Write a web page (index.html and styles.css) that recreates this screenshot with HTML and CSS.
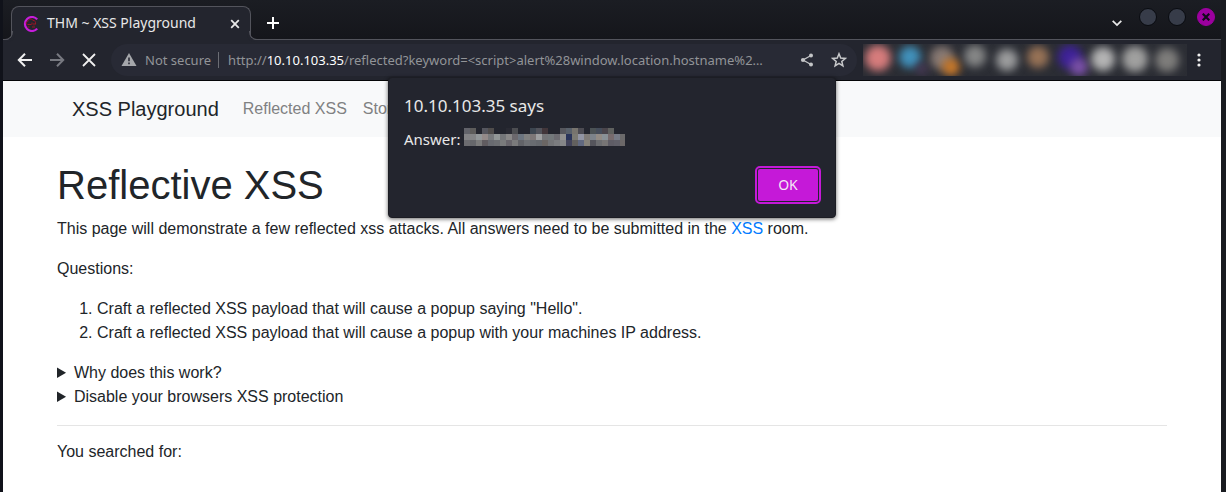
FILE: index.html
```html
<!DOCTYPE html>
<html lang="en">
<head>
<meta charset="utf-8">
<title>THM ~ XSS Playground</title>
<link rel="stylesheet" href="styles.css">
</head>
<body>
<div class="window">
  <header class="tabstrip">
    <div class="tab">
      <svg class="favicon" width="16" height="16" viewBox="0 0 16 16" fill="none"><path d="M14.2 3.4A7 7 0 1 0 14.2 12.6" stroke="#c61ddb" stroke-width="2.2"/><path d="M4.5 8.5c-2-.3-1.600-3 .3-3C5.500 2.500 9.500 2.500 10 4.500c2-.3 3 1.500 2.500 4M5 8.500h3.500M9 6.500v2M11 7v2.500M4.500 11h2M9 11h3" stroke="#a01525" stroke-width="1"/></svg>
      <span class="tab-title">THM ~ XSS Playground</span>
      <button class="icon" aria-label="Close tab"><svg width="10" height="10" viewBox="0 0 10 10"><path d="M1.200 1.200l7.600 7.600M8.800 1.200l-7.600 7.600" stroke="#e8e8e8" stroke-width="1.800"/></svg></button>
    </div>
    <button class="icon new-tab" aria-label="New tab"><svg width="12" height="12" viewBox="0 0 12 12"><path d="M6 0v12M0 6h12" stroke="#fff" stroke-width="2"/></svg></button>
    <div class="window-controls">
      <button class="icon search-tabs" aria-label="Search tabs"><svg width="10" height="7" viewBox="0 0 10 7" fill="none"><path d="M.7.8L5 5.100 9.300.8" stroke="#e8e8e8" stroke-width="1.800"/></svg></button>
      <button class="dot" aria-label="Minimize"></button>
      <button class="dot" aria-label="Maximize"></button>
      <button class="dot close" aria-label="Close"><svg width="8" height="8" viewBox="0 0 8 8"><path d="M.7.7l6.600 6.600M7.300.7L.7 7.300" stroke="#10091a" stroke-width="2.200"/></svg></button>
    </div>
  </header>
  <div class="toolbar">
    <div class="nav-buttons">
      <button class="icon" aria-label="Back"><svg width="16" height="14" viewBox="0 0 16 14" fill="none"><path d="M15 7H2M8 .8L1.800 7 8 13.200" stroke="#f0f0f0" stroke-width="2"/></svg></button>
      <button class="icon" aria-label="Forward" disabled><svg width="16" height="14" viewBox="0 0 16 14" fill="none"><path d="M1 7h13M8 .8L14.200 7 8 13.200" stroke="#777980" stroke-width="2"/></svg></button>
      <button class="icon" aria-label="Stop"><svg width="16" height="14" viewBox="0 0 16 14" fill="none"><path d="M2 1l12 12M14 1L2 13" stroke="#f0f0f0" stroke-width="1.800"/></svg></button>
    </div>
    <div class="address">
      <svg width="16" height="14" viewBox="0 0 16 14"><path d="M8 0l7.500 13H.5z" fill="#a5a7ab"/><path d="M8 4.500v3.800M8 9.500v1.700" stroke="#282a35" stroke-width="1.600"/></svg>
      <span class="security">Not secure</span>
      <span class="url">http://<b>10.10.103.35</b>/reflected?keyword=&lt;script&gt;alert%28window.location.hostname%2…</span>
      <button class="icon" aria-label="Share"><svg width="14" height="14" viewBox="0 0 14 14"><path d="M11 2.500L3 7l8 4.500" stroke="#c4c5c7" stroke-width="1.300" fill="none"/><g fill="#c4c5c7"><circle cx="11" cy="2.500" r="2"/><circle cx="3" cy="7" r="2.100"/><circle cx="11" cy="11.500" r="2"/></g></svg></button>
      <button class="icon" aria-label="Bookmark"><svg width="16" height="16" viewBox="0 0 16 16"><path d="M8 1.800l1.700 4.300 4.600.3-3.500 3 1.100 4.500L8 11.400l-3.900 2.500 1.100-4.500-3.500-3 4.600-.3z" fill="none" stroke="#c8c9cb" stroke-width="1.500"/></svg></button>
    </div>
    <div class="extensions">
      <svg width="324" height="32" viewBox="0 0 324 32">
        <defs><filter id="soft" x="-100%" y="-100%" width="300%" height="300%" color-interpolation-filters="sRGB"><feGaussianBlur stdDeviation="4.500"/></filter></defs>
        <rect width="324" height="32" fill="#2b2d34"/>
        <g>
          <circle filter="url(#soft)" cx="15" cy="14" r="13" fill="#d67c7c"/>
          <circle filter="url(#soft)" cx="47" cy="13" r="11" fill="#4191bb"/>
          <circle filter="url(#soft)" cx="59" cy="25" r="6" fill="#493958"/>
          <circle filter="url(#soft)" cx="79" cy="14" r="12" fill="#887a74"/>
          <circle filter="url(#soft)" cx="88" cy="23" r="9" fill="#c87829"/>
          <circle filter="url(#soft)" cx="112" cy="12" r="11" fill="#858686"/>
          <circle filter="url(#soft)" cx="144" cy="16" r="11" fill="#9b9c9d"/>
          <circle filter="url(#soft)" cx="175" cy="13" r="11" fill="#977256"/>
          <circle filter="url(#soft)" cx="207" cy="13" r="12" fill="#3e2298"/>
          <circle filter="url(#soft)" cx="216" cy="23" r="9" fill="#7c51aa"/>
          <circle filter="url(#soft)" cx="240" cy="15" r="12" fill="#b4b4b4"/>
          <circle filter="url(#soft)" cx="272" cy="15" r="13" fill="#a0a09f"/>
          <circle filter="url(#soft)" cx="304" cy="16" r="12" fill="#7e7d7b"/>
        </g>
      </svg>
    </div>
    <button class="icon menu" aria-label="Menu"><svg width="4" height="14" viewBox="0 0 4 14" fill="#f0f0f0"><circle cx="2" cy="2" r="1.600"/><circle cx="2" cy="7" r="1.600"/><circle cx="2" cy="12" r="1.600"/></svg></button>
  </div>
  <div class="page">
    <nav class="navbar">
      <div class="container navbar-inner">
        <a class="brand" href="#">XSS Playground</a>
        <a class="nav-link" href="#">Reflected XSS</a>
        <a class="nav-link" href="#">Stored XSS</a>
      </div>
    </nav>
    <main class="container content">
      <h1>Reflective XSS</h1>
      <p>This page will demonstrate a few reflected xss attacks. All answers need to be submitted in the <a href="#">XSS</a> room.</p>
      <p>Questions:</p>
      <ol>
        <li>Craft a reflected XSS payload that will cause a popup saying "Hello".</li>
        <li>Craft a reflected XSS payload that will cause a popup with your machines IP address.</li>
      </ol>
      <details><summary>Why does this work?</summary></details>
      <details><summary>Disable your browsers XSS protection</summary></details>
      <hr>
      <p>You searched for:</p>
    </main>
  </div>
  <div class="dialog" role="alertdialog" aria-labelledby="dialog-title">
    <h2 id="dialog-title">10.10.103.35 says</h2>
    <div class="message">Answer:
      <svg id="mosaic" width="161" height="18" viewBox="0 0 161 18" shape-rendering="crispEdges" aria-hidden="true"></svg>
    </div>
    <button class="ok">OK</button>
  </div>
</div>
<script src="mosaic.js"></script>
</body>
</html>
```
FILE: mosaic.js
```js
const rows = [
  "62636a 5d5c5b - 55565e 4f4c4b - - 292a33 4c4d51 - - 3d4650 51525a 42363a - - 56575d 59616b 77746e 4c4b52 - 4b5255 444c5a 4a454b 5f615f - -",
  "838386 838486 929799 938a89 787a7d 929797 747679 898888 6b686d 6c7580 808181 7d7777 9fa0a1 747578 73787b 6d6c72 929290 29345a 7b7a73 9295a4 807c79 7c838b 918b85 899196 776b6d 777b86 6b6a6b",
  "6c6c70 66676b 7b7b7b 605c60 686a70 6c6e72 7a7b7c 69666c 7b7b7c 626368 6e7074 696c71 65686d 6b6664 737477 7b7c7f 858688 42435a 62605e 616980 86837b 55555c 6c6d70 777575 5e5c65 605f68 6c6868"
];
const mosaic = document.getElementById("mosaic");
rows.forEach((row, y) => row.split(" ").forEach((color, x) => {
  if (color === "-") return;
  const cell = document.createElementNS("http://www.w3.org/2000/svg", "rect");
  cell.setAttribute("x", x * 6);
  cell.setAttribute("y", y * 6);
  cell.setAttribute("width", 6);
  cell.setAttribute("height", 6);
  cell.setAttribute("fill", "#" + color);
  mosaic.append(cell);
}));
```
FILE: styles.css
```css
* { box-sizing: border-box; }
body {
  margin: 0;
  background: #15171e;
  font-family: "Liberation Sans", Arial, sans-serif;
}
button { border: 0; padding: 0; font: inherit; }
.window {
  position: relative;
  display: flex;
  flex-direction: column;
  min-height: 100vh;
  border-left: 3px solid #10121a;
  border-right: 5px solid #191b20;
}
.icon { display: flex; background: none; }
.tabstrip {
  display: flex;
  align-items: flex-end;
  height: 40px;
  padding-left: 8px;
  background: linear-gradient(#1b1d23, #15161b);
  border-bottom: 1px solid #53545c;
  font-family: "Noto Sans", sans-serif;
}
.tab {
  position: relative;
  display: flex;
  align-items: center;
  width: 240px;
  height: 34px;
  margin-bottom: -1px;
  padding: 0 10px 0 11px;
  background: #23252e;
  border: 1px solid #53545c;
  border-bottom: 0;
  border-radius: 8px 8px 0 0;
  color: #e8e8e8;
  font-size: 14px;
}
.tab::before, .tab::after {
  content: "";
  position: absolute;
  bottom: 0;
  width: 8px;
  height: 8px;
  border-bottom: 1px solid #53545c;
}
.tab::before {
  left: -8px;
  border-right: 1px solid #53545c;
  border-bottom-right-radius: 8px;
  box-shadow: 2px 2px 0 #23252e;
}
.tab::after {
  right: -8px;
  border-left: 1px solid #53545c;
  border-bottom-left-radius: 8px;
  box-shadow: -2px 2px 0 #23252e;
}
.tab-title { flex: 1; margin-left: 8px; padding-bottom: 2px; white-space: nowrap; }
.new-tab { margin: 0 0 10px 16px; }
.window-controls {
  display: flex;
  gap: 11px;
  align-items: center;
  height: 39px;
  margin-left: auto;
  padding: 0 6px 5px 0;
}
.search-tabs { margin: 12px 6px 0 0; }
.dot {
  display: grid;
  place-items: center;
  width: 18px;
  height: 18px;
  border: 1px solid #090b10;
  border-radius: 50%;
  background: #373c49;
}
.dot.close { background: #9c009f; border-color: #9c009f; }
.toolbar {
  display: flex;
  align-items: center;
  height: 41px;
  padding: 0 20px 0 14px;
  background: #23252e;
  border-bottom: 1px solid #050608;
  font: 13px "Noto Sans", sans-serif;
}
.nav-buttons { display: flex; gap: 16px; margin-right: 14px; }
.address {
  display: flex;
  flex: 1;
  align-items: center;
  min-width: 0;
  height: 32px;
  margin-right: 6px;
  padding: 0 10px;
  border-radius: 16px;
  background: #282a35;
  color: #929498;
  white-space: nowrap;
}
.security { margin-left: 8px; padding-right: 7px; border-right: 1px solid #6b6d74; line-height: 16px; }
.url { flex: 1; min-width: 0; margin-left: 9px; overflow: hidden; }
.url b { color: #fff; font-weight: 400; }
.address .icon + .icon { margin-left: 17px; }
.extensions { display: flex; overflow: hidden; }
.menu { margin-left: 10px; }
.page {
  flex: 1;
  background: #fff;
  color: #212529;
  font-size: 16px;
  line-height: 24px;
}
.container { max-width: 1140px; margin: 0 auto; padding: 0 15px; }
.navbar { padding: 8px 0; background: #f8f9fa; }
.navbar-inner { display: flex; align-items: center; gap: 16px; height: 40px; padding: 0 30px; }
.brand { margin-right: 8px; color: #212529; font-size: 20px; text-decoration: none; }
.nav-link { color: #808182; text-decoration: none; }
.content { padding-top: 24px; }
h1 { margin: 0 0 8px; font-size: 40px; font-weight: 400; line-height: 48px; }
p, ol { margin: 0 0 16px; }
p a { color: #007bff; text-decoration: none; }
hr { margin: 16px 0 14px; border: 0; border-top: 1px solid #e5e5e5; }
.dialog {
  position: absolute;
  top: 77px;
  left: 385px;
  display: flex;
  flex-direction: column;
  width: 448px;
  padding: 16px 15px;
  border: 1px solid #1c1d24;
  border-radius: 4px;
  background: #23252e;
  box-shadow: 0 1px 4px #0009;
  color: #e8e8e8;
  font: 15px/20px "Noto Sans", sans-serif;
}
.dialog h2 { margin: 0 0 10px; font-size: 17px; font-weight: 400; line-height: 24px; }
.message { display: flex; gap: 3px; align-items: center; margin-bottom: 19px; }
.message svg { margin-bottom: 4px; }
.ok {
  align-self: flex-end;
  width: 60px;
  height: 32px;
  margin-right: 2px;
  border-radius: 2px;
  background: #c519d8;
  color: #f4e8f5;
  font-size: 14px;
  outline: 2px solid #c519d8;
  outline-offset: 1px;
}
```
